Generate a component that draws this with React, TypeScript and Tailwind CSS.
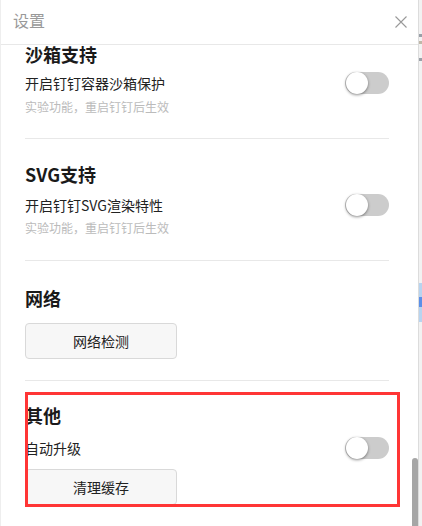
import React from "react";

const Toggle = () => (
  <div className="relative w-[44px] h-[22px] rounded-full bg-[#cccccc] shrink-0">
    <div className="absolute left-[1px] top-0 w-[22px] h-[22px] rounded-full bg-white shadow-[0_1px_3px_rgba(0,0,0,0.45)]" />
  </div>
);

export default function App() {
  const font = { fontFamily: '"Noto Sans CJK SC", "Microsoft YaHei", sans-serif' };
  return (
    <div className="w-[422px] h-[526px] flex bg-white overflow-hidden" style={font}>
      <div className="w-[419px] h-full flex flex-col border-r border-[#dcdcdc] border-l border-l-[#eeeeee]">
        <div className="h-[45px] shrink-0 border-b border-[#e8e8e8] flex items-start justify-between pl-[12px] pr-[11px] pt-[8px]">
          <span className="text-[16px] leading-[24px] text-[#999999]">设置</span>
          <svg width="12" height="12" viewBox="0 0 12 12" className="mt-[8px]">
            <path d="M0.5 0.5 L11.5 11.5 M11.5 0.5 L0.5 11.5" stroke="#999999" strokeWidth="1.1" fill="none" />
          </svg>
        </div>
        <div className="relative flex-1 overflow-hidden">
          <div>
            {/* Section 1 */}
            <div className="ml-[24px] mr-[29px] pb-[22px] border-b border-[#e8e8e8]">
              <div className="text-[18px] leading-[18px] font-bold text-[#1a1a1a]">沙箱支持</div>
              <div className="mt-[8px] h-[24px] flex items-center justify-between">
                <span className="text-[14px] text-[#222222]">开启钉钉容器沙箱保护</span>
                <Toggle />
              </div>
              <div className="mt-[3px] text-[12px] leading-[18px] text-[#bbbbbb]">实验功能，重启钉钉后生效</div>
            </div>
            {/* Section 2 */}
            <div className="ml-[24px] mr-[29px] pt-[23px] pb-[23px] border-b border-[#e8e8e8]">
              <div className="text-[18px] leading-[24px] font-bold text-[#1a1a1a]">SVG支持</div>
              <div className="mt-[7px] h-[24px] flex items-center justify-between">
                <span className="text-[14px] text-[#222222]">开启钉钉SVG渲染特性</span>
                <Toggle />
              </div>
              <div className="mt-[2px] text-[12px] leading-[18px] text-[#bbbbbb]">实验功能，重启钉钉后生效</div>
            </div>
            {/* Section 3 */}
            <div className="ml-[24px] mr-[29px] pt-[25px] pb-[21px] border-b border-[#e8e8e8]">
              <div className="text-[18px] leading-[24px] font-bold text-[#1a1a1a]">网络</div>
              <button className="mt-[13px] w-[152px] h-[36px] rounded-[4px] border border-[#d9d9d9] bg-[#f7f7f7] text-[14px] text-[#222222] flex items-center justify-center">
                网络检测
              </button>
            </div>
            {/* Section 4 */}
            <div className="relative ml-[24px] mr-[29px] pt-[22px]">
              <div className="text-[18px] leading-[24px] font-bold text-[#1a1a1a]">其他</div>
              <div className="mt-[9px] h-[24px] flex items-center justify-between">
                <span className="text-[14px] text-[#222222]">自动升级</span>
                <Toggle />
              </div>
              <button className="mt-[9px] w-[152px] h-[36px] rounded-[4px] border border-[#d9d9d9] bg-[#f7f7f7] text-[14px] text-[#222222] flex items-center justify-center">
                清理缓存
              </button>
              <div className="absolute left-0 top-[11px] w-[375px] h-[115px] border-[3px] border-[#ff3535]" />
            </div>
          </div>
          <div className="absolute right-0 bottom-0 w-[6px] h-[68px] rounded-t-full bg-[#a6a6a6]" />
        </div>
      </div>
      <div className="flex-1 h-full bg-[#f2f2f2] flex flex-col">
        <div className="h-[34px]" />
        <div className="h-[3px] bg-[#9aa0a8]" />
        <div className="h-[4px]" />
        <div className="h-[3px] bg-[#c0b8a8]" />
        <div className="h-[14px]" />
        <div className="h-[3px] bg-[#9aa0a8]" />
        <div className="h-[222px]" />
        <div className="h-[14px] bg-[#b8d4f0]" />
        <div className="h-[10px] bg-[#5b8fe8]" />
        <div className="h-[15px] bg-[#b8d4f0]" />
      </div>
    </div>
  );
}
